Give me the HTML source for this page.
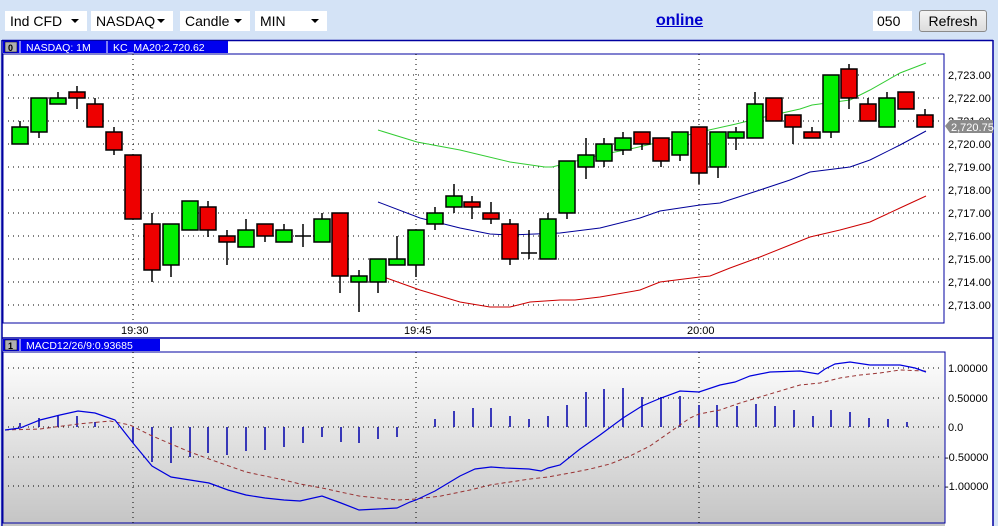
<!DOCTYPE html>
<html><head><meta charset="utf-8">
<style>
body{margin:0;width:998px;height:526px;overflow:hidden;background:#d4e3f6;font-family:"Liberation Sans",sans-serif;position:relative}
.sel{position:absolute;top:11px;height:20px;background:#fff;font-size:14px;line-height:20px;padding-left:5px;box-sizing:border-box;color:#000}
.sel:after{content:"";position:absolute;right:8px;top:8px;border-left:4px solid transparent;border-right:4px solid transparent;border-top:4px solid #000}
#online{position:absolute;left:656px;top:12px;font-size:16px;font-weight:bold;color:#0000cc;text-decoration:underline}
#inp{position:absolute;left:873px;top:11px;width:39px;height:20px;background:#fff;font-size:14px;line-height:20px;padding-left:4px;box-sizing:border-box}
#btn{position:absolute;left:919px;top:10px;width:68px;height:22px;border:1px solid #8a8a8a;border-radius:3px;background:linear-gradient(#f4f4f4,#dcdcdc);font-size:14px;text-align:center;line-height:20px;box-sizing:border-box}
svg{position:absolute;left:0;top:0}
</style></head><body>
<div class="sel" style="left:5px;width:82px">Ind CFD</div>
<div class="sel" style="left:91px;width:82px">NASDAQ</div>
<div class="sel" style="left:180px;width:70px">Candle</div>
<div class="sel" style="left:255px;width:72px">MIN</div>
<div id="online">online</div>
<div id="inp">050</div>
<div id="btn">Refresh</div>
<svg width="998" height="526" viewBox="0 0 998 526" font-family="Liberation Sans, sans-serif">
<defs><linearGradient id="g" x1="0" y1="0" x2="0" y2="1"><stop offset="0" stop-color="#ffffff"/><stop offset="1" stop-color="#c4c4c4"/></linearGradient></defs>
<rect x="2" y="40" width="991" height="486" fill="#fff"/>
<rect x="3" y="352" width="942" height="174" fill="url(#g)"/>
<g stroke="#0000a0" fill="none" stroke-width="1.5">
<line x1="2" y1="40" x2="2" y2="526"/><line x1="993" y1="40" x2="993" y2="526"/>
<line x1="2" y1="40.5" x2="993" y2="40.5"/>
<rect x="3" y="54" width="941" height="269" stroke-width="1"/>
<line x1="2" y1="338" x2="993" y2="338"/>
<rect x="3" y="352" width="942" height="171" stroke-width="1"/>
</g>
<rect x="3" y="41" width="225" height="12" fill="#0000ee"/>
<rect x="5" y="42" width="12" height="10" fill="#b0b0b0" stroke="#000" stroke-width="0.5"/>
<text x="8" y="51" font-size="9" font-weight="bold">0</text>
<line x1="20" y1="41" x2="20" y2="53" stroke="#fff"/><line x1="107" y1="41" x2="107" y2="53" stroke="#fff"/>
<text x="26" y="51" font-size="10.5" fill="#fff">NASDAQ: 1M</text>
<text x="113" y="51" font-size="10.5" fill="#fff">KC_MA20:2,720.62</text>
<rect x="3" y="339" width="157" height="12" fill="#0000ee"/>
<rect x="5" y="340" width="12" height="10" fill="#b0b0b0" stroke="#000" stroke-width="0.5"/>
<text x="8" y="349" font-size="9" font-weight="bold">1</text>
<line x1="20" y1="339" x2="20" y2="351" stroke="#fff"/>
<text x="26" y="349" font-size="10.5" fill="#fff">MACD12/26/9:0.93685</text>
<g stroke="#000" stroke-dasharray="1,4" stroke-width="1">
<path d="M8 75H940M8 98H940M8 121H940M8 144H940M8 167H940M8 190H940M8 213H940M8 236H940M8 259H940M8 282H940M8 305H940"/>
<path d="M8 368H940M8 398H940M8 427H940M8 457H940M8 486H940"/>
<path d="M133 54V323M416 54V323M699 54V323M133 352V523M416 352V523M699 352V523"/>
</g>
<g font-size="11" fill="#000">
<text x="948" y="79">2,723.00</text><text x="948" y="102">2,722.00</text><text x="948" y="125">2,721.00</text>
<text x="948" y="148">2,720.00</text><text x="948" y="171">2,719.00</text><text x="948" y="194">2,718.00</text>
<text x="948" y="217">2,717.00</text><text x="948" y="240">2,716.00</text><text x="948" y="263">2,715.00</text>
<text x="948" y="286">2,714.00</text><text x="948" y="309">2,713.00</text>
<text x="121" y="334">19:30</text><text x="404" y="334">19:45</text><text x="687" y="334">20:00</text>
<text x="948" y="372">1.00000</text><text x="948" y="402">0.50000</text><text x="948" y="431">0.0</text>
<text x="945" y="461">-0.50000</text><text x="945" y="490">-1.00000</text>
<text x="121" y="534">19:30</text><text x="404" y="534">19:45</text><text x="687" y="534">20:00</text>
</g>
<path d="M945 126l5-6h43v13h-43z" fill="#8a8a8a"/>
<text x="951" y="131" font-size="11" fill="#fff">2,720.75</text>
<polyline fill="none" stroke="#33cc33" points="378,130 417,142 460,150 510,162 545,167 552,167 576,161 600,155 630,149 660,142 700,132 736,124 760,118 800,109 812,105 850,100 870,90 900,73 926,63"/>
<polyline fill="none" stroke="#000099" points="378,202 420,218 460,228 490,234 510,235 560,233 600,228 640,218 660,211 700,205 720,203 760,190 790,180 810,172 850,167 870,160 900,145 926,131"/>
<polyline fill="none" stroke="#cc0000" points="378,275 420,290 460,302 490,307 510,307 530,302 560,300 575,300 600,297 640,290 660,282 700,277 710,276 730,268 760,257 790,245 810,237 840,230 870,222 900,208 926,196"/>
<g stroke="#000" stroke-width="1.5">
<path d="M20 121V144M39 98V138M58 92V104M77 86V109M95 98V127M114 127V155M133 155V219M152 213V282M171 224V277M190 201V230M208 201V237M227 230V265M246 219V247M265 224V242M284 224V242M303 224V247M295 236H311M322 213V242M340 213V293M359 270V312M378 259V293M397 236V265M416 230V277M435 207V230M454 184V213M472 196V219M491 202V224M510 219V265M529 230V259M521 253H537M548 213V259M567 161V219M586 138V179M604 138V167M623 132V155M642 132V150M661 138V167M680 132V161M699 127V184M718 132V178M736 127V150M755 92V138M774 98V121M793 115V144M812 127V138M831 75V138M849 64V109M868 98V121M887 92V127M906 92V109M925 109V127"/>
</g>
<g stroke="#000" stroke-width="1.5" fill="#00ee00">
<rect x="12" y="127" width="16" height="17"/><rect x="31" y="98" width="16" height="34"/><rect x="50" y="98" width="16" height="6"/>
<rect x="163" y="224" width="16" height="41"/><rect x="182" y="201" width="16" height="29"/><rect x="238" y="230" width="16" height="17"/>
<rect x="276" y="230" width="16" height="12"/><rect x="314" y="219" width="16" height="23"/><rect x="351" y="276" width="16" height="6"/>
<rect x="370" y="259" width="16" height="23"/><rect x="389" y="259" width="16" height="6"/><rect x="408" y="230" width="16" height="35"/>
<rect x="427" y="213" width="16" height="11"/><rect x="446" y="196" width="16" height="11"/><rect x="540" y="219" width="16" height="40"/>
<rect x="559" y="161" width="16" height="52"/><rect x="578" y="155" width="16" height="12"/><rect x="596" y="144" width="16" height="17"/>
<rect x="615" y="138" width="16" height="12"/><rect x="672" y="132" width="16" height="23"/><rect x="710" y="132" width="16" height="35"/>
<rect x="728" y="132" width="16" height="6"/><rect x="747" y="104" width="16" height="34"/><rect x="823" y="75" width="16" height="57"/>
<rect x="879" y="98" width="16" height="29"/>
</g>
<g stroke="#000" stroke-width="1.5" fill="#ee0000">
<rect x="69" y="92" width="16" height="6"/><rect x="87" y="104" width="16" height="23"/><rect x="106" y="132" width="16" height="18"/>
<rect x="125" y="155" width="16" height="64"/><rect x="144" y="224" width="16" height="46"/><rect x="200" y="207" width="16" height="23"/>
<rect x="219" y="236" width="16" height="6"/><rect x="257" y="224" width="16" height="12"/><rect x="332" y="213" width="16" height="63"/>
<rect x="464" y="202" width="16" height="5"/><rect x="483" y="213" width="16" height="6"/><rect x="502" y="224" width="16" height="35"/>
<rect x="634" y="132" width="16" height="12"/><rect x="653" y="138" width="16" height="23"/><rect x="691" y="127" width="16" height="46"/>
<rect x="766" y="98" width="16" height="23"/><rect x="785" y="115" width="16" height="12"/><rect x="804" y="132" width="16" height="6"/>
<rect x="841" y="69" width="16" height="29"/><rect x="860" y="104" width="16" height="17"/><rect x="898" y="92" width="16" height="17"/>
<rect x="917" y="115" width="16" height="12"/>
</g>
<path stroke="#0000aa" stroke-width="1.5" d="M20 427V423M39 427V418M58 427V416M77 427V416M95 427V422M133 427V443M152 427V462M171 427V463M190 427V457M208 427V453M227 427V455M246 427V451M265 427V450M284 427V447M303 427V443M322 427V437M341 427V442M359 427V443M378 427V439M397 427V437M435 427V419M454 427V411M473 427V408M491 427V408M510 427V416M529 427V419M548 427V416M567 427V405M586 427V392M604 427V389M623 427V388M642 427V397M661 427V397M680 427V396M699 427V405M717 427V405M737 427V406M756 427V404M775 427V406M794 427V410M813 427V416M831 427V410M850 427V412M869 427V418M888 427V419M907 427V422"/>
<polyline fill="none" stroke="#993333" stroke-dasharray="4,3" points="5,430 40,429 78,424 110,421 130,425 150,435 171,444 190,452 209,459 246,472 265,476 284,480 300,484 322,488 359,496 378,498 397,500 416,499 441,496 470,490 490,485 510,482 530,479 548,477 570,473 590,469 610,464 630,456 650,446 670,432 690,418 699,414 720,410 740,403 760,397 780,391 800,385 820,383 840,378 860,375 880,373 900,370 926,371"/>
<polyline fill="none" stroke="#0000dd" stroke-width="1.2" points="5,430 20,428 40,420 60,415 78,411 95,413 115,420 133,443 152,466 171,477 190,480 209,483 228,490 246,495 265,498 284,500 300,501 322,496 341,503 359,510 378,509 397,508 410,502 416,500 435,491 460,476 475,469 491,467 505,468 529,469 541,471 548,468 560,465 580,449 600,435 623,418 642,406 661,398 680,391 699,392 720,385 735,382 750,376 770,372 800,371 818,374 825,369 835,364 850,362 870,365 900,365 915,368 926,372"/>
</svg>
</body></html>
